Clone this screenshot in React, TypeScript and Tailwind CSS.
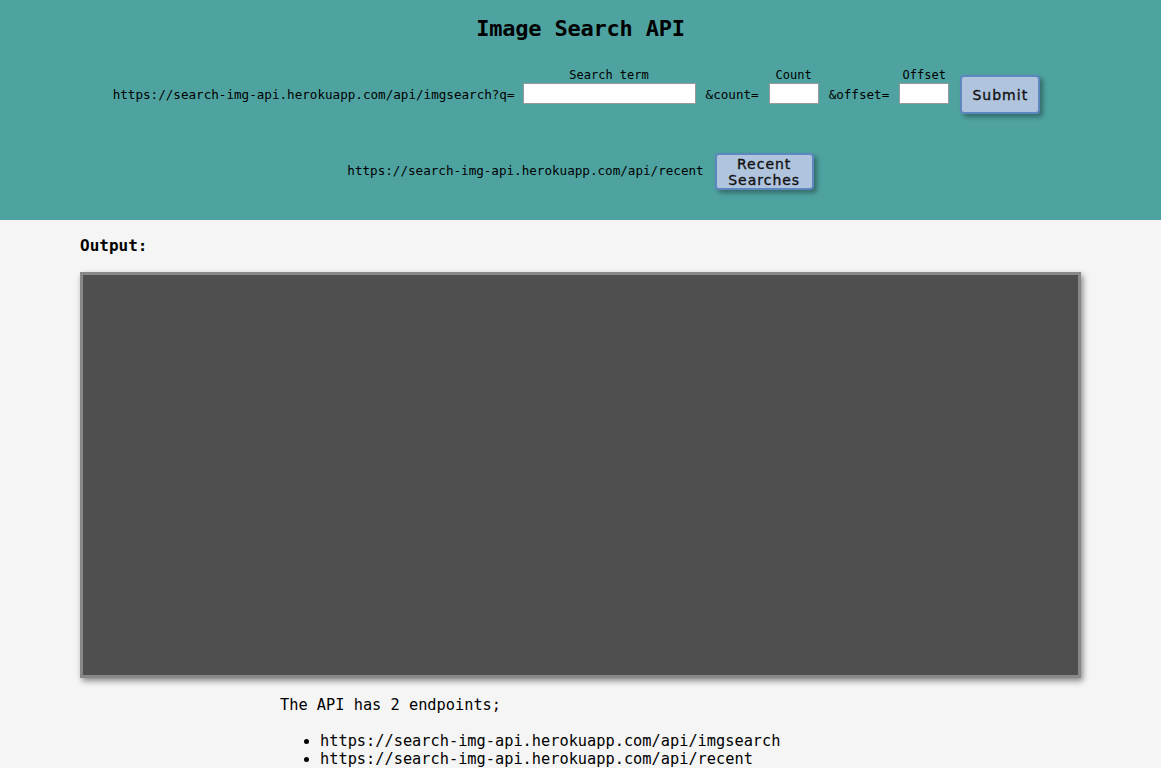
export default function App() {
  const mono = "font-['DejaVu_Sans_Mono',monospace]"
  const btn =
    "bg-[#b0c4de] border-2 border-[#5d87bf] rounded-[4px] shadow-[3px_3px_5px_rgba(0,0,0,0.35)] font-['DejaVu_Sans',sans-serif] text-[#111] tracking-[1px] [-webkit-text-stroke:0.35px_#111]"

  return (
    <div className={`min-h-screen bg-[#f5f5f5] text-black ${mono}`}>
      <header className="bg-[#4ea3a1] h-[220px] pt-[15px]">
        <h1 className="text-center text-[22px] font-bold leading-[28px] tracking-[-0.2px]">Image Search API</h1>

        <div className="flex items-end justify-center mt-[25px] mr-[8px] text-[12.6px] leading-[16px]">
          <span className="mb-[1px]">https://search-img-api.herokuapp.com/api/imgsearch?q=</span>
          <label className="flex flex-col items-center ml-[8px]">
            <span className="text-[12px] leading-[14px] mb-[1px]">Search term</span>
            <input className="w-[173px] h-[21px] bg-white border border-[#999]" />
          </label>
          <span className="ml-[10px] mb-[1px]">&amp;count=</span>
          <label className="flex flex-col items-center ml-[10px]">
            <span className="text-[12px] leading-[14px] mb-[1px]">Count</span>
            <input className="w-[50px] h-[21px] bg-white border border-[#999]" />
          </label>
          <span className="ml-[10px] mb-[1px]">&amp;offset=</span>
          <label className="flex flex-col items-center ml-[10px]">
            <span className="text-[12px] leading-[14px] mb-[1px]">Offset</span>
            <input className="w-[50px] h-[21px] bg-white border border-[#999]" />
          </label>
          <button className={`${btn} ml-[11px] mb-[-10px] w-[80px] h-[39px] text-[14px]`}>Submit</button>
        </div>

        <div className="flex items-center justify-center mt-[49px] text-[12.6px]">
          <span>https://search-img-api.herokuapp.com/api/recent</span>
          <button className={`${btn} ml-[11px] w-[99px] h-[37px] text-[14px] leading-[16px]`}>
            Recent
            <br />
            Searches
          </button>
        </div>
      </header>

      <main className="px-[80px]">
        <h2 className="pt-[16px] text-[16px] font-bold leading-[20px]">Output:</h2>
        <div className="mt-[16px] h-[406px] w-[1001px] bg-[#4f4f4f] border-[3px] border-[#888] shadow-[2px_3px_6px_rgba(0,0,0,0.45)]" />

        <div className="ml-[200px] mt-[18px] text-[15.3px] leading-[18px]">
          <p>The API has 2 endpoints;</p>
          <ul className="list-disc ml-[40px] mt-[18px]">
            <li>https://search-img-api.herokuapp.com/api/imgsearch</li>
            <li>https://search-img-api.herokuapp.com/api/recent</li>
          </ul>
        </div>
      </main>
    </div>
  )
}
